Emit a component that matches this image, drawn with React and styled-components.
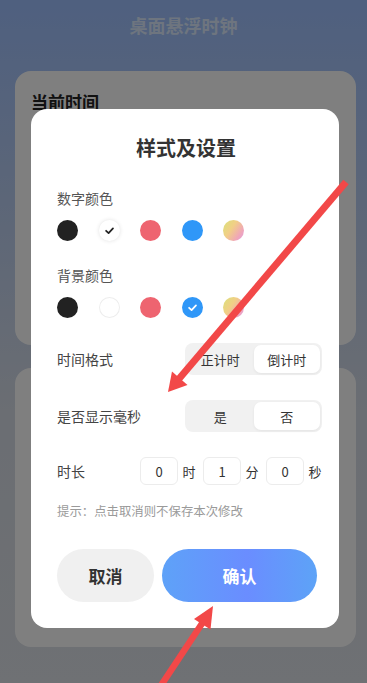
import React, { useState } from 'react';
import styled, { createGlobalStyle } from 'styled-components';

const GlobalStyle = createGlobalStyle`
  html, body {
    margin: 0;
    padding: 0;
  }
  body {
    font-family: "Noto Sans CJK SC", "Noto Sans", sans-serif;
  }
  * {
    box-sizing: border-box;
  }
`;

const Page = styled.div`
  position: relative;
  width: 367px;
  height: 683px;
  overflow: hidden;
  background: linear-gradient(180deg, #9ec0ff 0%, #b9cdf0 30%, #d6dce6 60%, #dee2e8 100%);
`;

const PageTitle = styled.div`
  height: 50px;
  display: flex;
  align-items: center;
  justify-content: center;
  font-size: 18px;
  font-weight: 700;
  color: #dcebff;
`;

const CardList = styled.div`
  display: flex;
  flex-direction: column;
  gap: 23px;
  padding: 21px 11px 0 15px;
`;

const Card = styled.div`
  background: #fff;
  border-radius: 16px;
  height: ${(p) => p.h}px;
  padding: 18px 16px;
`;

const CardTitle = styled.div`
  font-size: 17px;
  font-weight: 700;
  color: #222;
`;

const Mask = styled.div`
  position: absolute;
  inset: 0;
  background: rgba(0, 0, 0, 0.5);
  display: flex;
  justify-content: flex-start;
  align-items: flex-start;
  padding: 109px 0 0 31px;
`;

const Modal = styled.div`
  width: 308px;
  height: 519px;
  background: #fff;
  border-radius: 16px;
  padding: 0 17px 0 26px;
  display: flex;
  flex-direction: column;
`;

const ModalTitle = styled.div`
  text-align: center;
  margin: 26px 7px 0 0;
  line-height: 25px;
  font-size: 20px;
  font-weight: 700;
  color: #333;
`;

const SectionLabel = styled.div`
  margin-top: ${(p) => p.mt}px;
  line-height: 20px;
  font-size: 14px;
  color: #555;
`;

const Swatches = styled.div`
  display: flex;
  gap: 20.5px;
  margin-top: 12px;
`;

const Swatch = styled.div`
  width: 21px;
  height: 21px;
  border-radius: 50%;
  background: ${(p) => p.color};
  display: flex;
  align-items: center;
  justify-content: center;
  box-shadow: ${(p) => (p.outline ? '0 0 0 1px #ededed inset' : p.shadow ? '0 0 4px rgba(0,0,0,0.12)' : 'none')};
`;

const Row = styled.div`
  display: flex;
  align-items: center;
  justify-content: space-between;
  height: 32px;
  margin-top: ${(p) => p.mt}px;
`;

const RowLabel = styled.div`
  font-size: 14px;
  color: #444;
`;

const Segmented = styled.div`
  width: 137px;
  height: 32px;
  background: #f1f1f1;
  border-radius: 8px;
  padding: 2px;
  display: flex;
`;

const Segment = styled.div`
  flex: 1;
  display: flex;
  align-items: center;
  justify-content: center;
  font-size: 13px;
  color: #333;
  border-radius: 7px;
  background: ${(p) => (p.active ? '#fff' : 'transparent')};
  box-shadow: ${(p) => (p.active ? '0 1px 3px rgba(0,0,0,0.06)' : 'none')};
`;

const Duration = styled.div`
  display: flex;
  align-items: center;
  gap: 7px;
`;

const DurationPart = styled.div`
  display: flex;
  align-items: center;
  gap: 4px;
`;

const NumBox = styled.div`
  width: 38px;
  height: 28px;
  border: 1px solid #ececec;
  border-radius: 6px;
  display: flex;
  align-items: center;
  justify-content: center;
  font-size: 13px;
  color: #333;
`;

const Unit = styled.span`
  font-size: 13px;
  color: #333;
  width: 14px;
  text-align: center;
`;

const Hint = styled.div`
  margin-top: 15px;
  line-height: 18px;
  font-size: 12.4px;
  color: #9a9a9a;
`;

const Buttons = styled.div`
  display: flex;
  gap: 8px;
  margin-top: 29px;
  padding-right: 5px;
`;

const Button = styled.div`
  height: 53px;
  border-radius: 27px;
  display: flex;
  align-items: center;
  justify-content: center;
  font-size: 17px;
  font-weight: 700;
  width: ${(p) => p.w}px;
  color: ${(p) => (p.primary ? '#fff' : '#333')};
  background: ${(p) =>
    p.primary ? 'linear-gradient(90deg, #5ea2f8 0%, #6a8dff 55%, #5da3f7 100%)' : '#f0f0f0'};
`;

const Annotations = styled.svg`
  position: absolute;
  left: 0;
  top: 0;
  pointer-events: none;
`;

const Check = ({ color }) => (
  <svg width="11" height="11" viewBox="0 0 12 12">
    <path d="M2.3 6.3 L5 8.8 L9.8 3.6" fill="none" stroke={color} strokeWidth="1.9" strokeLinecap="round" strokeLinejoin="round" />
  </svg>
);

const rainbow = 'linear-gradient(125deg, #d9e27a 0%, #f1cf86 40%, #f0a6b8 75%, #de9ee2 100%)';

const numColors = [
  { c: '#222' },
  { c: '#fff', shadow: true, check: '#222' },
  { c: '#ee6470' },
  { c: '#2f97f8' },
  { c: rainbow },
];

const bgColors = [
  { c: '#222' },
  { c: '#fff', outline: true },
  { c: '#ee6470' },
  { c: '#2f97f8', check: '#fff' },
  { c: rainbow },
];

function SwatchRow({ items }) {
  return (
    <Swatches>
      {items.map((s, i) => (
        <Swatch key={i} color={s.c} shadow={s.shadow} outline={s.outline}>
          {s.check && <Check color={s.check} />}
        </Swatch>
      ))}
    </Swatches>
  );
}

export default function App() {
  const [mode, setMode] = useState('down');
  const [ms, setMs] = useState(false);

  return (
    <Page>
      <GlobalStyle />
      <PageTitle>桌面悬浮时钟</PageTitle>
      <CardList>
        <Card h={274}>
          <CardTitle>当前时间</CardTitle>
        </Card>
        <Card h={279} />
      </CardList>

      <Mask>
        <Modal>
          <ModalTitle>样式及设置</ModalTitle>
          <SectionLabel mt={28}>数字颜色</SectionLabel>
          <SwatchRow items={numColors} />
          <SectionLabel mt={24}>背景颜色</SectionLabel>
          <SwatchRow items={bgColors} />
          <Row mt={25}>
            <RowLabel>时间格式</RowLabel>
            <Segmented>
              <Segment active={mode === 'up'} onClick={() => setMode('up')}>正计时</Segment>
              <Segment active={mode === 'down'} onClick={() => setMode('down')}>倒计时</Segment>
            </Segmented>
          </Row>
          <Row mt={25}>
            <RowLabel>是否显示毫秒</RowLabel>
            <Segmented>
              <Segment active={ms} onClick={() => setMs(true)}>是</Segment>
              <Segment active={!ms} onClick={() => setMs(false)}>否</Segment>
            </Segmented>
          </Row>
          <Row mt={23}>
            <RowLabel>时长</RowLabel>
            <Duration>
              <DurationPart><NumBox>0</NumBox><Unit>时</Unit></DurationPart>
              <DurationPart><NumBox>1</NumBox><Unit>分</Unit></DurationPart>
              <DurationPart><NumBox>0</NumBox><Unit>秒</Unit></DurationPart>
            </Duration>
          </Row>
          <Hint>提示：点击取消则不保存本次修改</Hint>
          <Buttons>
            <Button w={97}>取消</Button>
            <Button w={155} primary>确认</Button>
          </Buttons>
        </Modal>
      </Mask>

      <Annotations width="367" height="683" viewBox="0 0 367 683">
        <g fill="#f24848" stroke="#f24848" strokeLinecap="butt">
          <line x1="346" y1="182" x2="178" y2="380" strokeWidth="7" />
          <polygon points="168,392 187.5,385 172,371.5" stroke="none" />
          <line x1="158" y1="690" x2="203" y2="622" strokeWidth="6.5" />
          <polygon points="213,606 210.5,629.5 194,619" stroke="none" />
        </g>
      </Annotations>
    </Page>
  );
}
